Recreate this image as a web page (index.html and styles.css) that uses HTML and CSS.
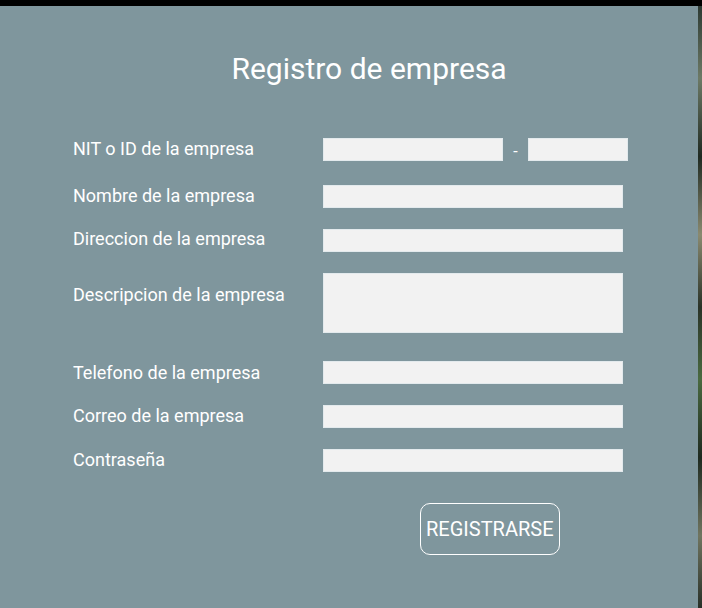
FILE: index.html
```html
<!DOCTYPE html>
<html lang="es">
<head>
<meta charset="utf-8">
<title>Registro de empresa</title>
<link rel="stylesheet" href="styles.css">
</head>
<body>
<div class="page">
  <div class="topbar"></div>
  <div class="main">
    <section class="panel">
      <h1 class="title">Registro de empresa</h1>
      <form class="form">
        <label class="label l-nit">NIT o ID de la empresa</label>
        <div class="field nit">
          <input class="input in-nit" type="text">
          <span class="dash">-</span>
          <input class="input in-dv" type="text">
        </div>

        <label class="label l-nombre">Nombre de la empresa</label>
        <div class="field"><input class="input" type="text"></div>

        <label class="label l-dir">Direccion de la empresa</label>
        <div class="field"><input class="input" type="text"></div>

        <label class="label l-desc">Descripcion de la empresa</label>
        <div class="field desc"><textarea class="input area"></textarea></div>

        <label class="label l-tel">Telefono de la empresa</label>
        <div class="field"><input class="input" type="text"></div>

        <label class="label l-low">Correo de la empresa</label>
        <div class="field"><input class="input" type="text"></div>

        <label class="label l-low">Contraseña</label>
        <div class="field"><input class="input" type="password"></div>

        <div class="actions">
          <button class="btn" type="button">REGISTRARSE</button>
        </div>
      </form>
    </section>
    <div class="edge"></div>
  </div>
</div>
</body>
</html>
```

FILE: styles.css
```css
* { box-sizing: border-box; }
html, body {
  margin: 0;
  padding: 0;
  background: #000;
  font-family: Roboto, "Liberation Sans", Arial, sans-serif;
}
.page {
  width: 702px;
  height: 608px;
  display: flex;
  flex-direction: column;
  overflow: hidden;
}
.topbar {
  height: 6px;
  background: #000;
}
.main {
  flex: 1;
  display: flex;
}
.panel {
  flex: 1;
  background: #7f969d;
  padding-top: 45px;
}
.edge {
  width: 4px;
  background: linear-gradient(180deg, #2d3a33 0%, #6d7a66 12%, #1f2a22 25%, #8a8a70 38%, #2a3328 50%, #4a6a40 62%, #1e2a20 75%, #707560 88%, #283028 100%);
}
.title {
  margin: 0;
  padding-left: 40px;
  text-align: center;
  font-size: 30px;
  font-weight: 400;
  line-height: 35px;
  color: #ffffff;
}
.form {
  margin-top: 52px;
  padding-left: 73px;
  display: grid;
  grid-template-columns: 250px 1fr;
  align-items: start;
}
.label {
  font-size: 18px;
  line-height: 21px;
  color: #ffffff;
}
.l-nit { margin-top: 0; }
.l-nombre { margin-top: 0; }
.l-dir { margin-top: -1px; }
.l-desc { margin-top: 11px; }
.l-tel { margin-top: 1px; }
.l-low { margin-top: 0; }
.field {
  display: flex;
  align-items: center;
  margin-bottom: 21px;
}
.field.nit { margin-bottom: 24px; }
.field.desc { margin-bottom: 28px; }
.input {
  display: block;
  width: 300px;
  height: 23px;
  margin: 0;
  padding: 0 4px;
  border: 1px solid #e3eaed;
  background: #f2f2f2;
  font: 14px Roboto, sans-serif;
  outline: none;
}
.in-nit { width: 180px; }
.in-dv { width: 100px; }
.dash {
  width: 25px;
  text-align: center;
  color: #ffffff;
  font-size: 16px;
  line-height: 16px;
  padding-top: 4px;
}
.area {
  height: 60px;
  resize: none;
}
.actions {
  grid-column: 2;
  margin-top: 10px;
  padding-left: 97px;
}
.btn {
  display: block;
  height: 52px;
  padding: 0 5px;
  border: 1px solid #ffffff;
  border-radius: 10px;
  background: transparent;
  color: #ffffff;
  font: 400 20px/23px Roboto, "Liberation Sans", sans-serif;
}
```
